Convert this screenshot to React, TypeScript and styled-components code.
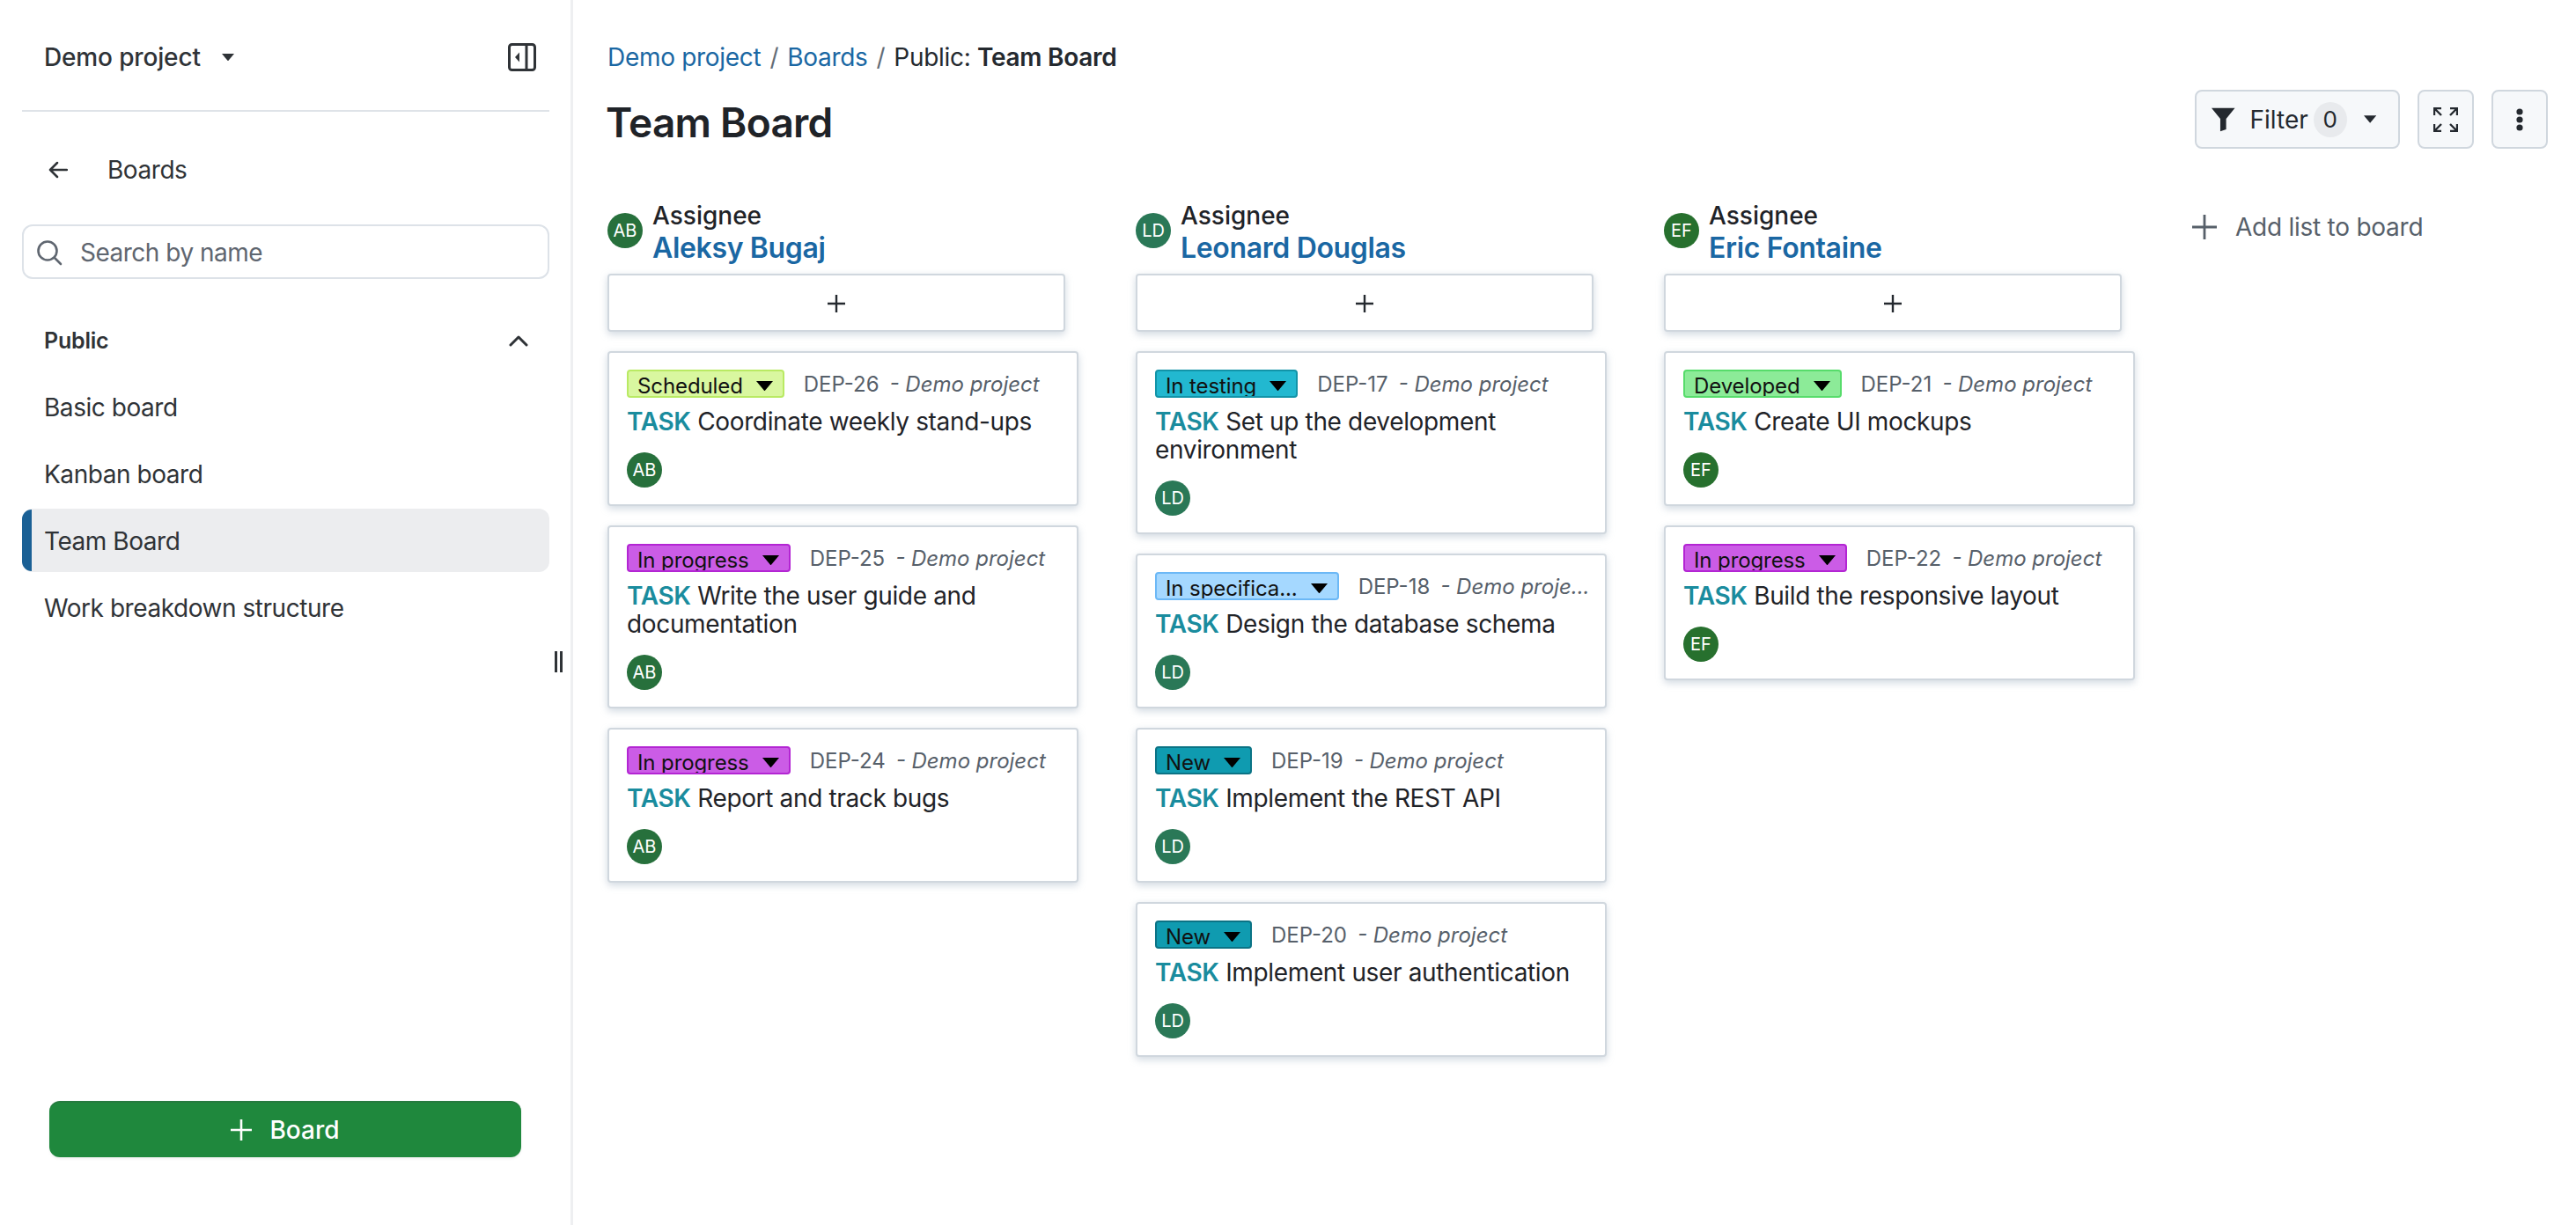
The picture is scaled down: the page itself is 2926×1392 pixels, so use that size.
import React from "react";
import styled, { createGlobalStyle } from "styled-components";

const Global = createGlobalStyle`
  html, body { margin: 0; padding: 0; background: #fff; }
  body { font-family: Inter, "Noto Sans", "Liberation Sans", sans-serif; color: #24292f; overflow: hidden; }
  * { box-sizing: border-box; }
`;

const Page = styled.div`display: flex; height: 1392px; width: 100%;`;

const Sidebar = styled.aside`
  position: relative; width: 651px; flex: none; height: 100%;
  display: flex; flex-direction: column;
  border-right: 3px solid #eeeff1;
`;
const SideHead = styled.div`
  height: 127px; margin: 0 24px 0 25px; padding: 5px 15px 0 25px;
  display: flex; align-items: center; justify-content: space-between;
  border-bottom: 2px solid #dfe3e8;
`;
const ProjectName = styled.div`
  display: flex; align-items: center; gap: 24px;
  font-size: 28px; font-weight: 500; letter-spacing: -0.15px; color: #2f3337;
`;
const BackRow = styled.div`
  height: 60px; margin: 36px 24px 0 25px; padding-left: 30px;
  display: flex; align-items: center; gap: 45px;
  font-size: 28px; letter-spacing: -0.45px; color: #2f3337;
`;
const SearchBox = styled.div`
  height: 62px; margin: 32px 24px 0 25px; padding: 2px 0 0 14px;
  display: flex; align-items: center; gap: 20px;
  border: 2px solid #dde2e8; border-radius: 12px;
  font-size: 28px; letter-spacing: -0.5px; color: #5f6670;
`;
const SectionHead = styled.div`
  height: 40px; margin: 50px 24px 0 25px; padding: 0 24px 0 25px;
  display: flex; align-items: center; justify-content: space-between;
  font-size: 25px; font-weight: 600; letter-spacing: -0.2px; color: #2f3337;
`;
const BoardList = styled.ul`
  list-style: none; margin: 19px 24px 0 25px; padding: 0;
  display: flex; flex-direction: column; gap: 4px;
`;
const BoardItem = styled.li<{ $active?: boolean }>`
  height: 72px; padding: 2px 0 0 25px; position: relative;
  display: flex; align-items: center;
  font-size: 28px; letter-spacing: -0.45px; color: #2f3337; border-radius: 12px;
  background: ${(p) => (p.$active ? "#ecedef" : "transparent")};
  ${(p) => p.$active && `
    &::before {
      content: ""; position: absolute; left: 0; top: 1px; bottom: 1px; width: 11px;
      background: #1a6095; border-radius: 12px 0 0 12px;
    }
  `}
`;
const DragHandle = styled.div`
  position: absolute; left: 630px; top: 740px; width: 9px; height: 24px;
  border-left: 3px solid #2f3337; border-right: 3px solid #2f3337;
`;
const NewBoard = styled.button`
  margin: auto 56px 77px 56px; height: 64px;
  display: flex; align-items: center; justify-content: center; gap: 20px;
  background: #1f883d; color: #fff; border: 0; border-radius: 12px;
  border-top: 2px solid #267a3f;
  box-shadow: 0 2px 3px rgba(0,0,0,.06);
  font: 500 28px Inter, sans-serif;
`;

const Main = styled.main`flex: 1; min-width: 0; padding: 48px 32px 0 39px;`;
const Crumbs = styled.nav`
  height: 34px; display: flex; align-items: center; gap: 10px;
  font-size: 28px; letter-spacing: -0.3px; color: #24292f; white-space: pre;
`;
const CrumbLink = styled.span`color: #1a67a3;`;
const CrumbSep = styled.span`color: #636c76;`;
const Strong = styled.b`font-weight: 600;`;
const TitleRow = styled.div`
  margin-top: 20px; height: 67px;
  display: flex; align-items: flex-start; justify-content: space-between;
`;
const Title = styled.h1`
  margin: 7px 0 0 -2px; font-size: 46px; line-height: 60px; font-weight: 600;
  letter-spacing: -0.75px; color: #1f2328;
`;
const Actions = styled.div`display: flex; gap: 20px;`;
const ToolButton = styled.div`
  height: 67px; min-width: 64px;
  display: flex; align-items: center; justify-content: center;
  background: #f6f8fa; border: 2px solid #d0d7de; border-radius: 8px;
  font-size: 28px; color: #24292f;
`;
const FilterButton = styled(ToolButton)`
  width: 233px; padding: 0 25px 0 17px; justify-content: flex-start;
`;
const FilterLabel = styled.span`margin-left: 17px;`;
const Count = styled.span`
  width: 40px; height: 40px; margin: 0 19px 0 6px; border-radius: 50%;
  display: flex; align-items: center; justify-content: center;
  background: #e8eaed; font-size: 26px;
`;

const BoardArea = styled.div`margin-top: 58px; display: flex; gap: 65px; align-items: flex-start;`;
const Column = styled.section`width: 535px; flex: none;`;
const ColHead = styled.header`height: 74px; display: flex; align-items: center; gap: 11px;`;
const Avatar = styled.div<{ $bg: string }>`
  width: 40px; height: 40px; border-radius: 50%; flex: none;
  display: flex; align-items: center; justify-content: center;
  background: ${(p) => p.$bg}; color: #fff; font-size: 20px;
`;
const HeadAvatar = styled(Avatar)`margin-bottom: 4px;`;
const HeadText = styled.div`display: flex; flex-direction: column;`;
const HeadLabel = styled.div`font-size: 28px; line-height: 36px; font-weight: 500; color: #1f2328;`;
const HeadName = styled.div`font-size: 32px; line-height: 38px; font-weight: 600; letter-spacing: -0.35px; color: #1a67a3;`;
const AddCard = styled.div`
  width: 520px; height: 66px; margin-top: 10px; padding-top: 2px;
  display: flex; align-items: center; justify-content: center;
  background: #fff; border: 2px solid #d0d7de; border-radius: 4px;
  box-shadow: 0 3px 8px rgba(140,159,180,.4);
`;
const Cards = styled.div`margin-top: 22px; display: flex; flex-direction: column; gap: 22px;`;
const Card = styled.article`
  padding: 19px 20px; background: #fff;
  border: 2px solid #d0d7de; border-radius: 4px;
  box-shadow: 0 3px 8px rgba(140,159,180,.4);
`;
const CardTop = styled.div`display: flex; align-items: center; height: 32px; min-width: 0;`;
const Status = styled.div<{ $bg: string; $bd: string }>`
  height: 32px; flex: none; padding: 5px 11px 0 10px;
  display: flex; align-items: center; gap: 15px; overflow: hidden;
  background: ${(p) => p.$bg}; border: 2px solid ${(p) => p.$bd}; border-radius: 4px;
  font-size: 24px; line-height: 28px; letter-spacing: -0.1px; color: #111;
`;
const StatusText = styled.span`white-space: nowrap;`;
const Meta = styled.div`
  margin-left: 22px; white-space: nowrap;
  font-size: 24px; color: #57606a;
`;
const Project = styled.i`margin-left: 12px;`;
const Subject = styled.div`margin-top: 11px; font-size: 28px; line-height: 32px; letter-spacing: -0.35px; color: #1f2328;`;
const TaskType = styled.b`font-weight: 600; color: #1a8c9e;`;
const CardAvatar = styled(Avatar)`margin-top: 19px;`;
const AddList = styled.div`
  padding-top: 14px; display: flex; align-items: center; gap: 21px;
  font-size: 28px; line-height: 34px; letter-spacing: -0.25px; color: #57606a;
`;

const Caret = ({ w = 14, color = "#2f3337" }: { w?: number; color?: string }) => (
  <svg width={w} height={w * 0.6} viewBox="0 0 10 6"><path d="M0 0h10L5 6z" fill={color} /></svg>
);
const Plus = ({ s, color, sw }: { s: number; color: string; sw: number }) => (
  <svg width={s} height={s} viewBox={`0 0 ${s} ${s}`}>
    <path d={`M${s / 2} 0V${s}M0 ${s / 2}H${s}`} stroke={color} strokeWidth={sw} strokeLinecap="round" />
  </svg>
);

type CardData = { status: string; bg: string; bd: string; id: string; text: string; project?: string };
type ColData = { initials: string; name: string; color: string; cards: CardData[] };

const S = {
  scheduled: { status: "Scheduled", bg: "#d9f7a0", bd: "#b9ea63" },
  progress: { status: "In progress", bg: "#cb5ce6", bd: "#b325d3" },
  testing: { status: "In testing", bg: "#22b8d0", bd: "#1294a8" },
  spec: { status: "In specifica...", bg: "#a5d8ff", bd: "#6cb8f6" },
  fresh: { status: "New", bg: "#0f9bb0", bd: "#0b7385" },
  developed: { status: "Developed", bg: "#8ceb98", bd: "#57dc6b" },
};

const columns: ColData[] = [
  {
    initials: "AB", name: "Aleksy Bugaj", color: "#27703c",
    cards: [
      { ...S.scheduled, id: "DEP-26", text: "Coordinate weekly stand-ups" },
      { ...S.progress, id: "DEP-25", text: "Write the user guide and documentation" },
      { ...S.progress, id: "DEP-24", text: "Report and track bugs" },
    ],
  },
  {
    initials: "LD", name: "Leonard Douglas", color: "#2a7857",
    cards: [
      { ...S.testing, id: "DEP-17", text: "Set up the development environment" },
      { ...S.spec, id: "DEP-18", text: "Design the database schema", project: "- Demo proje..." },
      { ...S.fresh, id: "DEP-19", text: "Implement the REST API" },
      { ...S.fresh, id: "DEP-20", text: "Implement user authentication" },
    ],
  },
  {
    initials: "EF", name: "Eric Fontaine", color: "#27702e",
    cards: [
      { ...S.developed, id: "DEP-21", text: "Create UI mockups" },
      { ...S.progress, id: "DEP-22", text: "Build the responsive layout" },
    ],
  },
];

export default function App() {
  return (
    <>
      <Global />
      <Page>
        <Sidebar>
          <SideHead>
            <ProjectName>Demo project <Caret /></ProjectName>
            <svg width="32" height="32" viewBox="0 0 32 32" fill="none">
              <rect x="1.5" y="1.5" width="29" height="29" rx="3" stroke="#2f3337" strokeWidth="3" />
              <path d="M21 2v28" stroke="#2f3337" strokeWidth="3" />
              <path d="M13 10.5v11L8 16z" fill="#2f3337" />
            </svg>
          </SideHead>
          <BackRow>
            <svg width="22" height="20" viewBox="0 0 22 20" fill="none">
              <path d="M21 10H2M10 2l-8 8 8 8" stroke="#2f3337" strokeWidth="2.5" strokeLinecap="round" strokeLinejoin="round" />
            </svg>
            Boards
          </BackRow>
          <SearchBox>
            <svg width="30" height="30" viewBox="0 0 30 30" fill="none">
              <circle cx="13" cy="13" r="10.5" stroke="#5f6670" strokeWidth="2.6" />
              <path d="M21 21l7 7" stroke="#5f6670" strokeWidth="2.6" strokeLinecap="round" />
            </svg>
            Search by name
          </SearchBox>
          <SectionHead>
            Public
            <svg width="22" height="14" viewBox="0 0 22 14" fill="none">
              <path d="M2 12l9-9 9 9" stroke="#2f3337" strokeWidth="3" strokeLinecap="round" strokeLinejoin="round" />
            </svg>
          </SectionHead>
          <BoardList>
            <BoardItem>Basic board</BoardItem>
            <BoardItem>Kanban board</BoardItem>
            <BoardItem $active>Team Board</BoardItem>
            <BoardItem>Work breakdown structure</BoardItem>
          </BoardList>
          <DragHandle />
          <NewBoard>
            <Plus s={24} color="#fff" sw={2.6} />
            Board
          </NewBoard>
        </Sidebar>
        <Main>
          <Crumbs>
            <CrumbLink>Demo project</CrumbLink>
            <CrumbSep>/</CrumbSep>
            <CrumbLink>Boards</CrumbLink>
            <CrumbSep>/</CrumbSep>
            <span>Public: <Strong>Team Board</Strong></span>
          </Crumbs>
          <TitleRow>
            <Title>Team Board</Title>
            <Actions>
              <FilterButton>
                <svg width="28" height="28" viewBox="0 0 28 28"><path d="M0 0h28L17.5 13v12.5L10.5 28V13z" fill="#24292f" /></svg>
                <FilterLabel>Filter</FilterLabel>
                <Count>0</Count>
                <Caret w={15} color="#24292f" />
              </FilterButton>
              <ToolButton>
                <svg width="28" height="28" viewBox="0 0 28 28" fill="none" stroke="#24292f" strokeWidth="2.4">
                  <path d="M1 9V1h8M1 1l8 8M19 1h8v8M27 1l-8 8M1 19v8h8M1 27l8-8M27 19v8h-8M27 27l-8-8" />
                </svg>
              </ToolButton>
              <ToolButton>
                <svg width="8" height="26" viewBox="0 0 8 26" fill="#24292f">
                  <circle cx="4" cy="4" r="3.6" /><circle cx="4" cy="13" r="3.6" /><circle cx="4" cy="22" r="3.6" />
                </svg>
              </ToolButton>
            </Actions>
          </TitleRow>
          <BoardArea>
            {columns.map((col) => (
              <Column key={col.name}>
                <ColHead>
                  <HeadAvatar $bg={col.color}>{col.initials}</HeadAvatar>
                  <HeadText>
                    <HeadLabel>Assignee</HeadLabel>
                    <HeadName>{col.name}</HeadName>
                  </HeadText>
                </ColHead>
                <AddCard><Plus s={20} color="#24292f" sw={2.4} /></AddCard>
                <Cards>
                  {col.cards.map((c) => (
                    <Card key={c.id}>
                      <CardTop>
                        <Status $bg={c.bg} $bd={c.bd}>
                          <StatusText>{c.status}</StatusText>
                          <Caret w={19} color="#000" />
                        </Status>
                        <Meta>{c.id}<Project>{c.project ?? "- Demo project"}</Project></Meta>
                      </CardTop>
                      <Subject><TaskType>TASK</TaskType> {c.text}</Subject>
                      <CardAvatar $bg={col.color}>{col.initials}</CardAvatar>
                    </Card>
                  ))}
                </Cards>
              </Column>
            ))}
            <AddList>
              <Plus s={28} color="#57606a" sw={2.8} />
              Add list to board
            </AddList>
          </BoardArea>
        </Main>
      </Page>
    </>
  );
}
